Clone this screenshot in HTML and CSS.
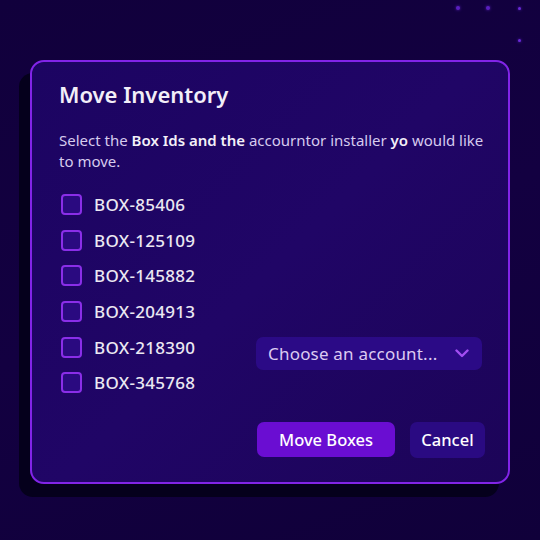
FILE: index.html
```html
<!DOCTYPE html>
<html>
<head>
<meta charset="utf-8">
<link rel="stylesheet" href="styles.css">
</head>
<body>
<div class="page">
  <span class="dot d1"></span><span class="dot d2"></span><span class="dot d3"></span><span class="dot d4"></span>
  <div class="modal">
    <h1 class="title">Move Inventory</h1>
    <p class="desc">Select the <b>Box Ids and the</b> accourntor installer <b>yo</b> would like to move.</p>
    <div class="content">
      <ul class="list">
        <li class="row"><span class="check"></span><span class="label">BOX-85406</span></li>
        <li class="row"><span class="check"></span><span class="label">BOX-125109</span></li>
        <li class="row"><span class="check"></span><span class="label">BOX-145882</span></li>
        <li class="row"><span class="check"></span><span class="label">BOX-204913</span></li>
        <li class="row"><span class="check"></span><span class="label">BOX-218390</span></li>
        <li class="row"><span class="check"></span><span class="label">BOX-345768</span></li>
      </ul>
      <div class="side">
        <div class="select">
          <span class="select-text">Choose an account...</span>
          <svg class="chev" width="14" height="9" viewBox="0 0 14 9"><path d="M1.5 1.5 L7 7 L12.5 1.5" fill="none" stroke="#a24ef2" stroke-width="2.4" stroke-linecap="round" stroke-linejoin="round"/></svg>
        </div>
      </div>
    </div>
    <div class="actions">
      <button class="btn primary">Move Boxes</button>
      <button class="btn secondary">Cancel</button>
    </div>
  </div>
</div>
</body>
</html>
```

FILE: styles.css
```css
* { box-sizing: border-box; }
html, body { margin: 0; padding: 0; }
body {
  width: 540px;
  height: 540px;
  overflow: hidden;
  font-family: "Noto Sans", "Liberation Sans", sans-serif;
}
.page {
  position: relative;
  width: 540px;
  height: 540px;
  padding: 60px 30px 0 30px;
  background: linear-gradient(160deg, #11003c 0%, #130041 50%, #10003a 100%);
}
.dot {
  position: absolute;
  width: 4px;
  height: 4px;
  border-radius: 50%;
  background: #5a1fc0;
  box-shadow: 0 0 3px #5a1fc0;
}
.d1 { left: 456px; top: 6px; }
.d2 { left: 486px; top: 6px; }
.d3 { left: 518px; top: 7px; width: 3px; height: 3px; background: #6a2ad8; }
.d4 { left: 518px; top: 39px; width: 3px; height: 3px; background: #6a2ad8; }
.modal {
  width: 480px;
  height: 424px;
  border: 2px solid #8224e8;
  border-radius: 14px;
  background: linear-gradient(135deg, #1c0462 0%, #200566 50%, #1c0458 100%);
  box-shadow: -11px 13px 0 0 #05001c;
  padding: 17px 23px 0 27px;
  display: flex;
  flex-direction: column;
}
.title {
  margin: 0;
  font-size: 22px;
  font-weight: 600;
  color: #f2eef8;
  line-height: 30px;
}
.desc {
  margin: 21px 0 0 0;
  font-size: 15px;
  line-height: 21px;
  color: #d6cbee;
}
.desc b { color: #f3f0f8; font-weight: 600; }
.content {
  display: flex;
  margin-top: 15px;
}
.list {
  list-style: none;
  margin: 0;
  padding: 0 0 0 2px;
  width: 197px;
}
.row {
  display: flex;
  align-items: center;
  height: 35.6px;
}
.check {
  width: 21px;
  height: 21px;
  border: 2px solid #8a2ee8;
  border-radius: 4px;
  background: #2a0a80;
  flex: none;
}
.label {
  margin-left: 12px;
  font-size: 17px;
  font-weight: 500;
  letter-spacing: 0.3px;
  color: #ebe8f2;
}
.side {
  padding-top: 150px;
}
.select {
  width: 226px;
  height: 33px;
  border-radius: 7px;
  background: #2b0a86;
  display: flex;
  align-items: center;
  justify-content: space-between;
  padding: 0 13px 0 12px;
}
.select-text {
  font-size: 17px;
  letter-spacing: 0.2px;
  color: #dccbf2;
}
.actions {
  display: flex;
  justify-content: flex-end;
  gap: 15px;
  margin-top: 21px;
}
.btn {
  font-family: "Noto Sans", "Liberation Sans", sans-serif;
  font-size: 16.5px;
  font-weight: 500;
  color: #ffffff;
  border: none;
  border-radius: 7px;
  height: 35px;
  padding: 0;
}
.primary {
  width: 138px;
  background: #6a0dd2;
}
.secondary {
  width: 75px;
  height: 36px;
  background: #2a0a82;
}
```
